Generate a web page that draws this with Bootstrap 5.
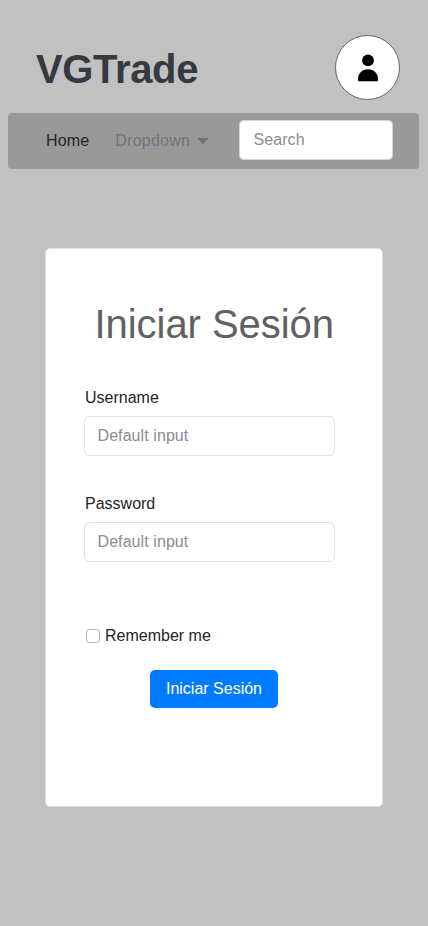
<!DOCTYPE html>
<html lang="es">
<head>
<meta charset="utf-8">
<meta name="viewport" content="width=device-width, initial-scale=1">
<title>VGTrade</title>
<link href="https://cdn.jsdelivr.net/npm/bootstrap@5.3.0/dist/css/bootstrap.min.css" rel="stylesheet">
<style>
body{font-family:"Liberation Sans",Arial,sans-serif;background:#c1c1c1;color:#212529;min-height:926px}
.site-head{height:113px;padding:35px 28px 0 36px}
.brand-name{font-size:40px;font-weight:700;line-height:48px;color:#343a40;margin-top:10px;letter-spacing:-.35px}
.avatar{width:65px;height:65px;border:1px solid #666;background:#fff}
.avatar svg{margin-left:1px}
.site-nav{height:56px;margin:0 9px 0 8px;background:#999;border-radius:4px;padding:0 26px 0 38px}
.site-nav a{line-height:24px;letter-spacing:.15px}
.nav-drop{color:#6c757d;margin-left:26px}
.nav-drop span:first-child{letter-spacing:.25px}
.caret{width:0;height:0;border:6px solid transparent;border-top-color:#6c757d;border-bottom:0;margin-left:7px}
.form-control{height:40px;padding:6px 12px 6px 12.5px;border-color:#dedfe1;border-radius:6px;letter-spacing:.08px}
.form-control::placeholder{color:#868e96;opacity:1}
.site-nav .form-control{width:154px;border-radius:4px;border-color:#ced4da;margin-bottom:2px;padding-left:13.5px}
.login-card{width:338px;height:559px;margin:79px 0 0 45px;border:1px solid #dfdfdf;border-radius:5px;padding:51px 47px 0 38px}
.login-title{font-size:40px;line-height:48px;color:#616161;font-weight:400;margin:0 -20px 38px 10.5px;white-space:nowrap;letter-spacing:-.05px}
.login-card label{line-height:24px;margin-left:1px}
.field{margin-bottom:36px}
.field label{margin-bottom:6px}
.remember{margin:62px 0 0 2px}
.login-card .form-check-input{width:14px;height:14px;margin:0;border:1px solid #b5b5b5;border-radius:3px}
.remember label{margin-left:5px}
.login-btn{width:128px;height:38px;margin:22px 0 0 66px;padding:0;background:#007bff;color:#fff;border:0;border-radius:5px;line-height:38px}
</style>
<script src="https://cdn.jsdelivr.net/npm/bootstrap@5.3.0/dist/js/bootstrap.bundle.min.js"></script>
</head>
<body>
<header class="site-head d-flex justify-content-between align-items-start">
  <h1 class="brand-name mb-0">VGTrade</h1>
  <a href="#" class="avatar rounded-circle d-flex align-items-center justify-content-center" aria-label="Perfil">
    <svg width="20" height="28" viewBox="0 0 20 28"><circle cx="10" cy="6.4" r="5.9"/><path d="M0 25.2C0 19.2 4 15.3 10 15.3s10 3.9 10 9.9c0 1.4-.3 2-1 2H1C.3 27.2 0 26.6 0 25.2Z"/></svg>
  </a>
</header>
<nav class="site-nav d-flex align-items-center">
  <a href="#" class="text-decoration-none text-body">Home</a>
  <a href="#" class="nav-drop text-decoration-none d-flex align-items-center"><span>Dropdown</span><span class="caret"></span></a>
  <input class="form-control ms-auto" type="search" placeholder="Search">
</nav>
<main class="card login-card">
  <h2 class="login-title">Iniciar Sesión</h2>
  <form>
    <div class="field"><label class="d-block" for="user">Username</label><input id="user" class="form-control" placeholder="Default input"></div>
    <div class="field"><label class="d-block" for="pass">Password</label><input id="pass" class="form-control" placeholder="Default input"></div>
    <div class="remember d-flex align-items-center"><input id="rem" class="form-check-input" type="checkbox"><label for="rem">Remember me</label></div>
    <button type="button" class="btn login-btn">Iniciar Sesión</button>
  </form>
</main>
</body>
</html>
